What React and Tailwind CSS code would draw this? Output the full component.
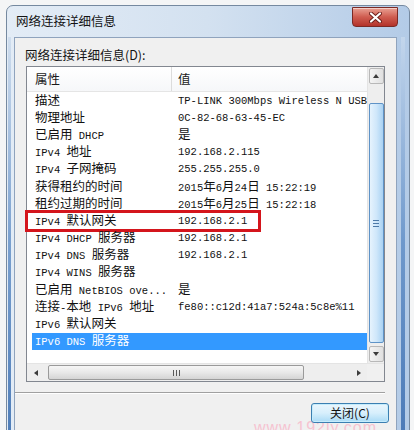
const rows = [
  ['描述', 'TP-LINK 300Mbps Wireless N USB Adapter', 'clip'],
  ['物理地址', '0C-82-68-63-45-EC'],
  ['已启用 DHCP', '是'],
  ['IPv4 地址', '192.168.2.115'],
  ['IPv4 子网掩码', '255.255.255.0'],
  ['获得租约的时间', '2015年6月24日 15:22:19'],
  ['租约过期的时间', '2015年6月25日 15:22:18'],
  ['IPv4 默认网关', '192.168.2.1', 'mark'],
  ['IPv4 DHCP 服务器', '192.168.2.1'],
  ['IPv4 DNS 服务器', '192.168.2.1'],
  ['IPv4 WINS 服务器', ''],
  ['已启用 NetBIOS ove...', '是'],
  ['连接-本地 IPv6 地址', 'fe80::c12d:41a7:524a:5c8e%11'],
  ['IPv6 默认网关', ''],
  ['IPv6 DNS 服务器', '', 'sel'],
];

const cjk = /([\u3000-\u303f\u4e00-\u9fff\uff00-\uffef]+)/;

// SimSun-ish mix: narrow mono latin, full-width CJK
const Txt = ({ s }) =>
  s.split(cjk).map((part, i) =>
    cjk.test(part) ? (
      <span key={i} className="font-['Noto_Sans_CJK_SC',sans-serif] text-[12.5px]">
        {part}
      </span>
    ) : (
      <span key={i}>{part}</span>
    )
  );

const Tri = ({ dir, color = '#3c3c3c' }) => {
  const pts = {
    up: '0,5 3,1 6,5',
    down: '0,1 3,5 6,1',
    left: '5,0 1,3 5,6',
    right: '1,0 5,3 1,6',
  }[dir];
  return (
    <svg width="6" height="6" viewBox="0 0 6 6">
      <polygon points={pts} fill={color} />
    </svg>
  );
};

const VScroll = () => (
  <div className="w-[17px] flex flex-col items-center bg-[#eeeeee] border-l border-[#e4e4e4]">
    <div className="mt-[1px] w-[15px] h-[16px] flex items-center justify-center border border-[#b8b8b8] rounded-[2px] bg-gradient-to-r from-[#f4f4f4] to-[#e0e0e0]">
      <Tri dir="up" />
    </div>
    <div className="mt-[19px] w-[15px] h-[240px] flex flex-col items-center justify-center gap-[2px] border border-[#5f93c7] rounded-[2px] bg-gradient-to-r from-[#e6f3fd] via-[#cfe7fa] to-[#a9d2f3]">
      <div className="w-[6px] h-[1px] bg-[#4d7aa8]" />
      <div className="w-[6px] h-[1px] bg-[#4d7aa8]" />
      <div className="w-[6px] h-[1px] bg-[#4d7aa8]" />
    </div>
    <div className="flex-1" />
    <div className="mb-[1px] w-[15px] h-[16px] flex items-center justify-center border border-[#b8b8b8] rounded-[2px] bg-gradient-to-r from-[#f4f4f4] to-[#e0e0e0]">
      <Tri dir="down" />
    </div>
  </div>
);

const HScroll = () => (
  <div className="h-[18px] flex items-center bg-[#eeeeee] border-t border-[#e4e4e4]">
    <div className="w-[17px] h-full flex items-center justify-center">
      <Tri dir="left" />
    </div>
    <div className="ml-[4px] w-[256px] h-[15px] flex items-center justify-center gap-[2px] border border-[#9a9a9a] rounded-[2px] bg-gradient-to-b from-[#f6f6f6] via-[#e8e8e8] to-[#d4d4d4]">
      <div className="w-[1px] h-[6px] bg-[#5a5a5a]" />
      <div className="w-[1px] h-[6px] bg-[#5a5a5a]" />
      <div className="w-[1px] h-[6px] bg-[#5a5a5a]" />
    </div>
    <div className="flex-1" />
    <div className="w-[17px] h-full flex items-center justify-center">
      <Tri dir="right" />
    </div>
    <div className="w-[17px] h-full bg-[#f0f0f0]" />
  </div>
);

const Row = ({ name, value, flag }) => {
  const sel = flag === 'sel';
  return (
    <div className="relative ml-[5px] h-[17.2px]">
      <div
        className={
          'w-[335px] h-full flex items-center whitespace-nowrap leading-[14px] ' +
          (sel ? 'bg-[#3399ff] text-white' : 'text-[#111]')
        }
      >
        <div className="w-[140px] shrink-0 pl-[3px]">
          <Txt s={name} />
        </div>
        <div className={'w-[195px] pl-[6px] ' + (flag === 'clip' ? 'overflow-hidden' : '')}>
          <Txt s={value} />
        </div>
      </div>
      {flag === 'mark' && (
        <div className="absolute left-[-7px] top-[-2px] w-[236px] h-[22px] border-[3px] border-[#d4151c]" />
      )}
    </div>
  );
};

const App = () => {
  return (
    <div className="relative w-[414px] h-[430px] overflow-hidden bg-[#f4f5f6] pt-[5px] pl-[6px] font-['Noto_Sans_CJK_SC',sans-serif]">
      <div className="w-[404px] h-[440px] flex flex-col rounded-t-[7px] border border-[#7589a0] bg-gradient-to-r from-[#e3ecf6] via-[#d3e1f0] to-[#b3cbe7]">
        {/* title bar */}
        <div className="h-[31px] flex items-start justify-between">
          <div className="pl-[9px] pt-[7px] text-[12.5px] leading-[16px] text-[#141414]">
            网络连接详细信息
          </div>
          <div className="mt-[1px] mr-[11px] w-[46px] h-[20px] flex items-center justify-center rounded-b-[4px] border border-[#7a2a25] bg-gradient-to-b from-[#e8a093] via-[#cf5c50] to-[#b3322a] shadow-[inset_0_1px_0_rgba(255,255,255,0.5)]">
            <svg width="13" height="11" viewBox="0 0 13 11">
              <path d="M2 1.5 L11 9.5 M11 1.5 L2 9.5" stroke="#6b1d18" strokeWidth="4" strokeLinecap="round" />
              <path d="M2 1.5 L11 9.5 M11 1.5 L2 9.5" stroke="#ffffff" strokeWidth="2.2" strokeLinecap="round" />
            </svg>
          </div>
        </div>

        {/* body */}
        <div className="flex flex-1">
          <div className="w-[7px] flex">
            <div className="ml-[1px] w-[3px] h-full bg-gradient-to-b from-[#d0deee] via-[#7aa0cf] to-[#4d7cb8]" />
          </div>

          <div className="w-[383px] flex flex-col border border-[#8fa3bd] bg-[#f0f0f0]">
            <div className="mt-[9px] ml-[10px] text-[12.5px] leading-[16px] text-[#141414]">
              网络连接详细信息(D):
            </div>

            {/* list view */}
            <div className="mt-[3px] ml-[11px] w-[359px] h-[316px] flex flex-col border border-[#828790] bg-white font-['Liberation_Mono',monospace] text-[10.5px]">
              <div className="flex h-[296px]">
                <div className="flex-1 flex flex-col">
                  <div className="h-[25px] flex items-center border-b border-[#e5e5e5] bg-gradient-to-b from-white to-[#f6f7f9] font-['Noto_Sans_CJK_SC',sans-serif] text-[12.5px] text-[#1a1a1a]">
                    <div className="w-[145px] h-full flex items-center pl-[8px] border-r border-[#dcdcdc]">属性</div>
                    <div className="pl-[6px]">值</div>
                  </div>
                  {rows.map(([n, v, f]) => (
                    <Row key={n} name={n} value={v} flag={f} />
                  ))}
                </div>
                <VScroll />
              </div>
              <HScroll />
            </div>

            <div className="mt-[10px] w-[370px] h-[2px] border-t border-[#a0a0a0] border-b border-b-white" />

            <div className="mt-[9px] mr-[7px] self-end relative z-10 w-[78px] h-[20px] flex items-center justify-center rounded-[3px] border border-[#3c7fb1] bg-gradient-to-b from-[#eaf6fd] via-[#d7effc] to-[#a9dbf6] shadow-[inset_0_0_0_1px_#c5ecfc] text-[12px] leading-none text-[#111]">
              关闭(C)
            </div>
          </div>

          <div className="w-[12px] flex">
            <div className="ml-[4px] w-[4px] h-full bg-gradient-to-b from-[#c3d6ec] via-[#6f99cc] to-[#4a79b6]" />
          </div>
        </div>
      </div>

      <div className="absolute left-[254px] top-[420px] text-[16px] leading-none tracking-[1px] text-[#f6c3d0] font-['Liberation_Sans',sans-serif] whitespace-nowrap">
        www.192ly.com
      </div>
    </div>
  );
};

export default App;
